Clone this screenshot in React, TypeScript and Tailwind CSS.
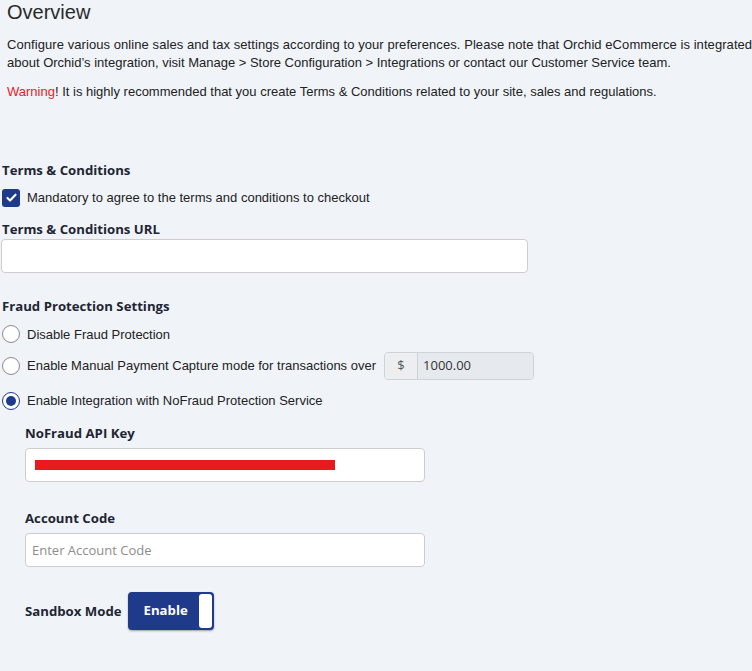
import React, { useState } from 'react';

const sans = "font-['Liberation_Sans',Arial,sans-serif]";
const heading = "font-['Open_Sans',sans-serif] font-bold text-[13.2px] text-[#1f2533]";

function Radio({ checked, onClick }: { checked: boolean; onClick: () => void }) {
  return (
    <button
      type="button"
      onClick={onClick}
      className={`flex h-[18px] w-[18px] shrink-0 items-center justify-center rounded-full border bg-white ${
        checked ? 'border-[#1e3a8a]' : 'border-[#8a8a8a]'
      }`}
    >
      {checked && <span className="h-[10px] w-[10px] rounded-full bg-[#1e3a8a]" />}
    </button>
  );
}

export default function App() {
  const [agree, setAgree] = useState(true);
  const [fraud, setFraud] = useState<'disable' | 'manual' | 'nofraud'>('nofraud');
  const [sandbox, setSandbox] = useState(true);

  return (
    <div className={`min-h-screen w-full overflow-hidden bg-[#f0f4f9] text-[#222] ${sans}`}>
      {/* Overview */}
      <div className="pl-[7px] pt-[1px]">
        <h1 className="text-[20px] leading-[22px] text-[#2a2a2a]">Overview</h1>
        <p className="mt-[13px] whitespace-nowrap text-[13px] leading-[18px]">
          <span className="tracking-[0.07px]">
            Configure various online sales and tax settings according to your preferences. Please note that Orchid eCommerce is integrated
          </span>
          <br />
          about Orchid’s integration, visit Manage &gt; Store Configuration &gt; Integrations or contact our Customer Service team.
        </p>
        <p className="mt-[11px] text-[13px] leading-[18px]">
          <span className="text-[#e8191f]">Warning</span>! It is highly recommended that you create Terms &amp; Conditions related to your site, sales and regulations.
        </p>
      </div>

      {/* Terms & Conditions */}
      <div className="mt-[60px] pl-[2px]">
        <div className={`${heading} leading-[18px]`}>Terms &amp; Conditions</div>
        <label className="mt-[9px] flex cursor-pointer items-center gap-[7px] text-[13px]">
          <button
            type="button"
            onClick={() => setAgree(!agree)}
            className={`flex h-[18px] w-[18px] items-center justify-center rounded-[3px] ${
              agree ? 'bg-[#1e3a8a]' : 'border border-[#8a8a8a] bg-white'
            }`}
          >
            {agree && (
              <svg viewBox="0 0 16 16" className="h-[13px] w-[13px]" fill="none" stroke="white" strokeWidth="2.6" strokeLinecap="round" strokeLinejoin="round">
                <path d="M3 8.5l3.2 3.2L13 4.5" />
              </svg>
            )}
          </button>
          <span>Mandatory to agree to the terms and conditions to checkout</span>
        </label>
        <div className={`${heading} mt-[12px] leading-[18px]`}>Terms &amp; Conditions URL</div>
        <input
          type="text"
          className="mt-[1px] ml-[-1px] block h-[34px] w-[527px] rounded-[4px] border border-[#cdcdcd] bg-white px-[8px] text-[13px] outline-none"
        />
      </div>

      {/* Fraud Protection */}
      <div className="mt-[24px] pl-[2px]">
        <div className={`${heading} leading-[18px]`}>Fraud Protection Settings</div>
        <div className="mt-[10px] flex items-center gap-[7px] text-[13px]">
          <Radio checked={fraud === 'disable'} onClick={() => setFraud('disable')} />
          <span>Disable Fraud Protection</span>
        </div>
        <div className="mt-[8px] flex items-center gap-[7px] text-[13px]">
          <Radio checked={fraud === 'manual'} onClick={() => setFraud('manual')} />
          <span>Enable Manual Payment Capture mode for transactions over</span>
          <div className="ml-[1px] flex h-[28px] w-[150px] overflow-hidden rounded-[4px] border border-[#cfd2d6] font-['Open_Sans',sans-serif] text-[13px]">
            <span className="flex w-[33px] items-center justify-center border-r border-[#cfd2d6] bg-[#eceef0] text-[#555]">$</span>
            <span className="flex flex-1 items-center bg-[#e6e9ed] px-[5px] text-[#333]">1000.00</span>
          </div>
        </div>
        <div className="mt-[11px] flex items-center gap-[7px] text-[13px]">
          <Radio checked={fraud === 'nofraud'} onClick={() => setFraud('nofraud')} />
          <span>Enable Integration with NoFraud Protection Service</span>
        </div>

        {/* NoFraud details */}
        <div className="pl-[23px]">
          <div className={`${heading} mt-[13px] leading-[18px]`}>NoFraud API Key</div>
          <div className="mt-[6px] flex h-[34px] w-[400px] items-center rounded-[4px] border border-[#cdcdcd] bg-white px-[9px]">
            <div className="h-[10px] w-[300px] bg-[#e8191f]" />
          </div>
          <div className={`${heading} mt-[27px] leading-[18px]`}>Account Code</div>
          <input
            type="text"
            placeholder="Enter Account Code"
            className="mt-[6px] block h-[34px] w-[400px] rounded-[4px] border border-[#cdcdcd] bg-white px-[6px] font-['Open_Sans',sans-serif] text-[13px] outline-none placeholder:text-[#8d8d8d]"
          />
          <div className="mt-[25px] flex items-center gap-[6px]">
            <span className={`${heading} leading-[18px]`}>Sandbox Mode</span>
            <button
              type="button"
              onClick={() => setSandbox(!sandbox)}
              className={`flex h-[38px] w-[86px] items-center justify-between rounded-[4px] pl-[16px] pr-[2px] shadow-[0_1px_2px_rgba(0,0,0,0.35)] ${
                sandbox ? 'bg-[#1f3a8a]' : 'bg-[#9aa3b5]'
              }`}
            >
              <span className="font-['Open_Sans',sans-serif] text-[13.2px] font-bold text-white">{sandbox ? 'Enable' : 'Disable'}</span>
              <span className="h-[34px] w-[13px] rounded-[3px] bg-white" />
            </button>
          </div>
        </div>
      </div>
      <div className="h-[40px]" />
    </div>
  );
}
